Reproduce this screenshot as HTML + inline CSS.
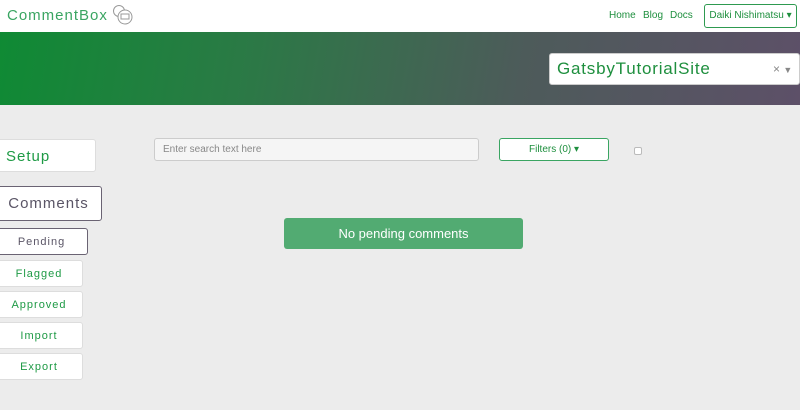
<!DOCTYPE html>
<html><head><style>
*{box-sizing:border-box;margin:0;padding:0}
body{width:800px;height:410px;overflow:hidden;background:#ececec;font-family:"Liberation Sans",sans-serif;position:relative}
.a{position:absolute}
.hdr{left:0;top:0;width:800px;height:32px;background:#fff}
.ban{left:0;top:32px;width:800px;height:73px;background:linear-gradient(100deg,#0f8a34 0%,#2a7a45 30%,#4d5b5a 65%,#5d5068 100%)}
.nav{top:10px;font-size:10px;color:#1e8f3e}
.btn{background:#fff;border:1px solid #ddd;border-radius:3px;color:#1e9a45;text-align:center;letter-spacing:1px}
</style></head><body>
<div class="a hdr"></div>
<div class="a" style="left:7px;top:7px;font-size:15px;color:#3aa562;letter-spacing:1px">CommentBox</div>
<svg class="a" style="left:112px;top:3px" width="22" height="23"><circle cx="7" cy="8" r="5.5" fill="none" stroke="#999" stroke-width="1"/><circle cx="13" cy="14" r="7" fill="#fff" stroke="#999" stroke-width="1"/><rect x="9" y="11" width="8" height="5" fill="none" stroke="#999" stroke-width="1"/></svg>
<div class="a nav" style="left:609px">Home</div>
<div class="a nav" style="left:643px">Blog</div>
<div class="a nav" style="left:670px">Docs</div>
<div class="a" style="left:704px;top:4px;width:93px;height:24px;border:1px solid #2e9a50;border-radius:3px;font-size:10px;color:#1e8f3e;line-height:22px;text-align:center">Daiki Nishimatsu ▾</div>
<div class="a ban"></div>
<div class="a" style="left:549px;top:53px;width:251px;height:32px;background:#fff;border-radius:3px;border:1px solid #ccc"></div>
<div class="a" style="left:557px;top:59px;font-size:17px;color:#1e8f3e;letter-spacing:.8px">GatsbyTutorialSite</div>
<div class="a" style="left:773px;top:62px;font-size:12px;color:#888">× <span style="font-size:9px">▼</span></div>
<div class="a btn" style="left:-5px;top:139px;width:101px;height:33px;font-size:15px;line-height:33px;text-align:left;padding-left:10px">Setup</div>
<div class="a btn" style="left:-5px;top:186px;width:107px;height:35px;font-size:15px;line-height:33px;color:#5a5566;border:1px solid #6a6373">Comments</div>
<div class="a btn" style="left:-5px;top:228px;width:93px;height:27px;font-size:11px;line-height:27px;color:#5a5566;border:1px solid #6a6373">Pending</div>
<div class="a btn" style="left:-5px;top:260px;width:88px;height:27px;font-size:11px;line-height:26px">Flagged</div>
<div class="a btn" style="left:-5px;top:291px;width:88px;height:27px;font-size:11px;line-height:26px">Approved</div>
<div class="a btn" style="left:-5px;top:322px;width:88px;height:27px;font-size:11px;line-height:26px">Import</div>
<div class="a btn" style="left:-5px;top:353px;width:88px;height:27px;font-size:11px;line-height:26px">Export</div>
<div class="a" style="left:154px;top:138px;width:325px;height:23px;background:#f5f5f5;border:1px solid #ccc;border-radius:3px;font-size:10px;color:#888;line-height:21px;padding-left:8px">Enter search text here</div>
<div class="a" style="left:499px;top:138px;width:110px;height:23px;background:#fff;border:1px solid #3aa562;border-radius:3px;font-size:10px;color:#1e8f3e;line-height:21px;text-align:center">Filters (0) ▾</div>
<div class="a" style="left:634px;top:147px;width:8px;height:8px;border:1px solid #bbb;border-radius:2px;background:#fff"></div>
<div class="a" style="left:284px;top:218px;width:239px;height:31px;background:#52ab72;border-radius:3px;color:#fff;font-size:13px;line-height:31px;text-align:center">No pending comments</div>
</body></html>
